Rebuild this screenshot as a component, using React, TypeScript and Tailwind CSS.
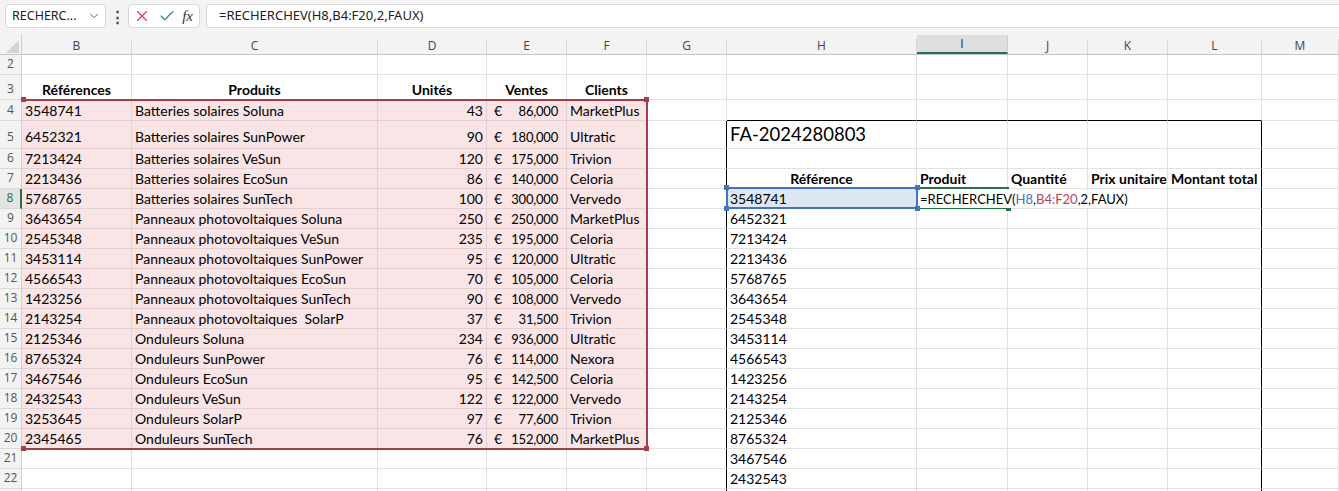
import React from 'react';
import { ChevronDown, X, Check } from 'lucide-react';

const COLS = ['B', 'C', 'D', 'E', 'F', 'G', 'H', 'I', 'J', 'K', 'L', 'M'];
const GRID = 'grid grid-cols-[22px_110px_246px_109px_80px_80px_80px_190px_91px_80px_80px_94px_1fr]';

const data: string[][] = [
  ['3548741', 'Batteries solaires Soluna', '43', '86,000', 'MarketPlus'],
  ['6452321', 'Batteries solaires SunPower', '90', '180,000', 'Ultratic'],
  ['7213424', 'Batteries solaires VeSun', '120', '175,000', 'Trivion'],
  ['2213436', 'Batteries solaires EcoSun', '86', '140,000', 'Celoria'],
  ['5768765', 'Batteries solaires SunTech', '100', '300,000', 'Vervedo'],
  ['3643654', 'Panneaux photovoltaiques Soluna', '250', '250,000', 'MarketPlus'],
  ['2545348', 'Panneaux photovoltaiques VeSun', '235', '195,000', 'Celoria'],
  ['3453114', 'Panneaux photovoltaiques SunPower', '95', '120,000', 'Ultratic'],
  ['4566543', 'Panneaux photovoltaiques EcoSun', '70', '105,000', 'Celoria'],
  ['1423256', 'Panneaux photovoltaiques SunTech', '90', '108,000', 'Vervedo'],
  ['2143254', 'Panneaux photovoltaiques\u00a0 SolarP', '37', '31,500', 'Trivion'],
  ['2125346', 'Onduleurs Soluna', '234', '936,000', 'Ultratic'],
  ['8765324', 'Onduleurs SunPower', '76', '114,000', 'Nexora'],
  ['3467546', 'Onduleurs EcoSun', '95', '142,500', 'Celoria'],
  ['2432543', 'Onduleurs VeSun', '122', '122,000', 'Vervedo'],
  ['3253645', 'Onduleurs SolarP', '97', '77,600', 'Trivion'],
  ['2345465', 'Onduleurs SunTech', '76', '152,000', 'MarketPlus'],
];

const hvals = [
  '3548741', '6452321', '7213424', '2213436', '5768765', '3643654', '2545348', '3453114',
  '4566543', '1423256', '2143254', '2125346', '8765324', '3467546', '2432543',
];

const ROWS = [2, 3, 4, 5, 6, 7, 8, 9, 10, 11, 12, 13, 14, 15, 16, 17, 18, 19, 20, 21, 22, 23];

function rowHeight(r: number) {
  if (r === 3) return 'h-[25px]';
  if (r === 4) return 'h-[21px]';
  if (r === 5) return 'h-[28px]';
  return 'h-[20px]';
}

function Formula() {
  return (
    <span className="relative z-10 bg-white pr-[2px] leading-[17px] text-[13px]">
      =RECHERCHEV(<span className="text-[#4472c4]">H8</span>,<span className="text-[#b0475a]">B4:F20</span>,2,FAUX)
    </span>
  );
}

function cellContent(r: number, c: number): { node: React.ReactNode; cls: string } {
  if (r === 3 && c <= 4) {
    const h = ['Références', 'Produits', 'Unités', 'Ventes', 'Clients'][c];
    return { node: h, cls: 'justify-center font-bold' };
  }
  if (r >= 4 && r <= 20 && c <= 4) {
    const row = data[r - 4];
    if (c === 0 || c === 1 || c === 4) return { node: row[c], cls: 'justify-start' };
    if (c === 2) return { node: row[2], cls: 'justify-end' };
    if (c === 3)
      return {
        node: (
          <>
            <span>€</span>
            <span className="text-[13px] tracking-[-0.2px]">{row[3]}</span>
          </>
        ),
        cls: 'justify-between !pl-[7px] !pr-[8px]',
      };
  }
  if (r === 5 && c === 6) {
    return { node: <span className="text-[18.5px] leading-[24px]">FA-2024280803</span>, cls: 'justify-start' };
  }
  if (r === 7) {
    if (c === 6) return { node: 'Référence', cls: 'justify-center font-bold' };
    if (c === 7) return { node: 'Produit', cls: 'justify-start font-bold' };
    if (c === 8) return { node: 'Quantité', cls: 'justify-start font-bold' };
    if (c === 9) return { node: 'Prix unitaire', cls: 'justify-start font-bold !overflow-visible' };
    if (c === 10) return { node: 'Montant total', cls: 'justify-start font-bold !overflow-visible' };
  }
  if (r >= 8 && r <= 22 && c === 6) {
    return { node: hvals[r - 8], cls: 'justify-start' };
  }
  if (r === 8 && c === 7) {
    return { node: <Formula />, cls: 'justify-start !overflow-visible' };
  }
  return { node: null, cls: '' };
}

function borderCls(r: number, c: number) {
  const inRange = r >= 4 && r <= 20 && c <= 4;
  let right = inRange ? 'border-r-[#e4cfd2]' : 'border-r-[#e1e1e1]';
  let bottom = inRange ? 'border-b-[#e4cfd2]' : 'border-b-[#e1e1e1]';
  if ((c === 5 || c === 10) && r >= 5) right = 'border-r-black';
  if (r === 4 && c >= 6 && c <= 10) bottom = 'border-b-black';
  let bg = '';
  if (inRange) bg = 'bg-[#f9e4e6]';
  if (r === 8 && c === 6) bg = 'bg-[#dde6f3]';
  return `${right} ${bottom} ${bg}`;
}

function RowHeader({ r }: { r: number }) {
  const active = r === 8;
  return (
    <div
      className={`flex items-end justify-center border-b border-b-[#dadada] text-[12px] leading-[18px] ${
        r === 5 ? 'pb-[2px]' : 'pb-[1px]'
      } ${
        active
          ? 'bg-[#e3e3e3] text-[#217346] border-r-2 border-r-[#217346]'
          : 'bg-[#f3f3f3] text-[#555] border-r border-r-[#cfcfcf]'
      }`}
      style={{ fontFamily: '"Open Sans", sans-serif' }}
    >
      {r <= 22 ? r : ''}
    </div>
  );
}

function SheetRow({ r }: { r: number }) {
  return (
    <div className={`${GRID} ${rowHeight(r)}`}>
      <RowHeader r={r} />
      {COLS.map((_, c) => {
        const { node, cls } = cellContent(r, c);
        return (
          <div
            key={c}
            className={`flex items-end px-[3px] border-r border-b overflow-hidden whitespace-nowrap leading-[18px] ${
              r === 5 ? 'pb-[2px]' : 'pb-0'
            } ${borderCls(r, c)} ${cls}`}
          >
            {node}
          </div>
        );
      })}
    </div>
  );
}

function Handle({ className }: { className: string }) {
  return <div className={`absolute w-[5px] h-[5px] ${className}`} />;
}

export default function App() {
  return (
    <div
      className="w-[1339px] h-[491px] overflow-hidden bg-white text-[14px] text-black"
      style={{ fontFamily: 'Lato, "Liberation Sans", sans-serif' }}
    >
      {/* Formula bar */}
      <div
        className="h-[34px] bg-[#f3f3f3] flex items-start pt-[4px] pl-[5px] text-[13px] text-[#222]"
        style={{ fontFamily: '"Noto Sans", sans-serif' }}
      >
        <div className="w-[101px] h-[24px] bg-white border border-[#d6d6d6] rounded-[4px] flex items-center pl-[6px] pr-[4px]">
          <span className="flex-1 text-[12.5px]">RECHERC...</span>
          <ChevronDown size={14} strokeWidth={1.5} className="text-[#555]" />
        </div>
        <div className="w-[22px] h-[24px] flex items-center justify-center text-[#444] text-[15px] font-bold">⋮</div>
        <div className="w-[72px] h-[24px] bg-white border border-[#d6d6d6] rounded-[4px] flex items-center justify-between pl-[4px] pr-[6px]">
          <X size={18} strokeWidth={1.5} color="#d9363e" />
          <Check size={18} strokeWidth={1.5} color="#2e8b57" />
          <span className="italic text-[15px] text-[#333]" style={{ fontFamily: '"Liberation Serif", serif' }}>
            fx
          </span>
        </div>
        <div className="ml-[6px] flex-1 h-[24px] bg-white border border-[#d6d6d6] rounded-l-[4px] border-r-0 flex items-center pl-[12px] text-[13px]">
          =RECHERCHEV(H8,B4:F20,2,FAUX)
        </div>
      </div>

      {/* Column headers */}
      <div className={`${GRID} h-[21px] bg-[#f3f3f3] border-b border-b-[#c6c6c6]`} style={{ fontFamily: '"Open Sans", sans-serif' }}>
        <div className="flex items-end justify-end pr-[2px] pb-[1px] border-r border-r-[#cfcfcf]">
          <svg width="13" height="13" viewBox="0 0 13 13">
            <polygon points="0,13 13,13 13,0" fill="#d4d4d4" />
          </svg>
        </div>
        {COLS.map((l, c) => (
          <div key={l} className="flex items-end">
            <div
              className={`w-full flex items-center justify-center text-[12px] ${
                c === 7
                  ? 'h-[19px] bg-[#dedede] border-b-2 border-b-[#217346] border-r border-r-[#cfcfcf] text-[#222]'
                  : 'h-[15px] border-r border-r-[#d8d8d8] text-[#444] pb-[1px]'
              }`}
            >
              {l}
            </div>
          </div>
        ))}
      </div>

      {/* Body */}
      <div className="relative">
        {ROWS.map((r) => (
          <SheetRow key={r} r={r} />
        ))}

        {/* Range B4:F20 outline */}
        <div className="absolute left-[22px] top-[44px] w-[626px] h-[351px] border-t-2 border-r-2 border-b-2 border-[#a53e4b] pointer-events-none" />
        <Handle className="left-[21px] top-[42px] bg-[#a53e4b]" />
        <Handle className="left-[644px] top-[42px] bg-[#a53e4b]" />
        <Handle className="left-[21px] top-[391px] bg-[#a53e4b]" />
        <Handle className="left-[644px] top-[391px] bg-[#a53e4b]" />

        {/* I8 active cell */}
        <div className="absolute left-[917px] top-[132px] w-[92px] h-[22px] border-t-2 border-b-2 border-[#217346] pointer-events-none" />
        <Handle className="left-[1006px] top-[151px] bg-[#217346]" />

        {/* H8 reference */}
        <div className="absolute left-[726px] top-[132px] w-[192px] h-[22px] border-2 border-[#4472c4] pointer-events-none" />
        <Handle className="left-[724px] top-[130px] bg-[#4472c4]" />
        <Handle className="left-[915px] top-[130px] bg-[#4472c4]" />
        <Handle className="left-[724px] top-[151px] bg-[#4472c4]" />
        <Handle className="left-[915px] top-[151px] bg-[#4472c4]" />
      </div>
    </div>
  );
}
